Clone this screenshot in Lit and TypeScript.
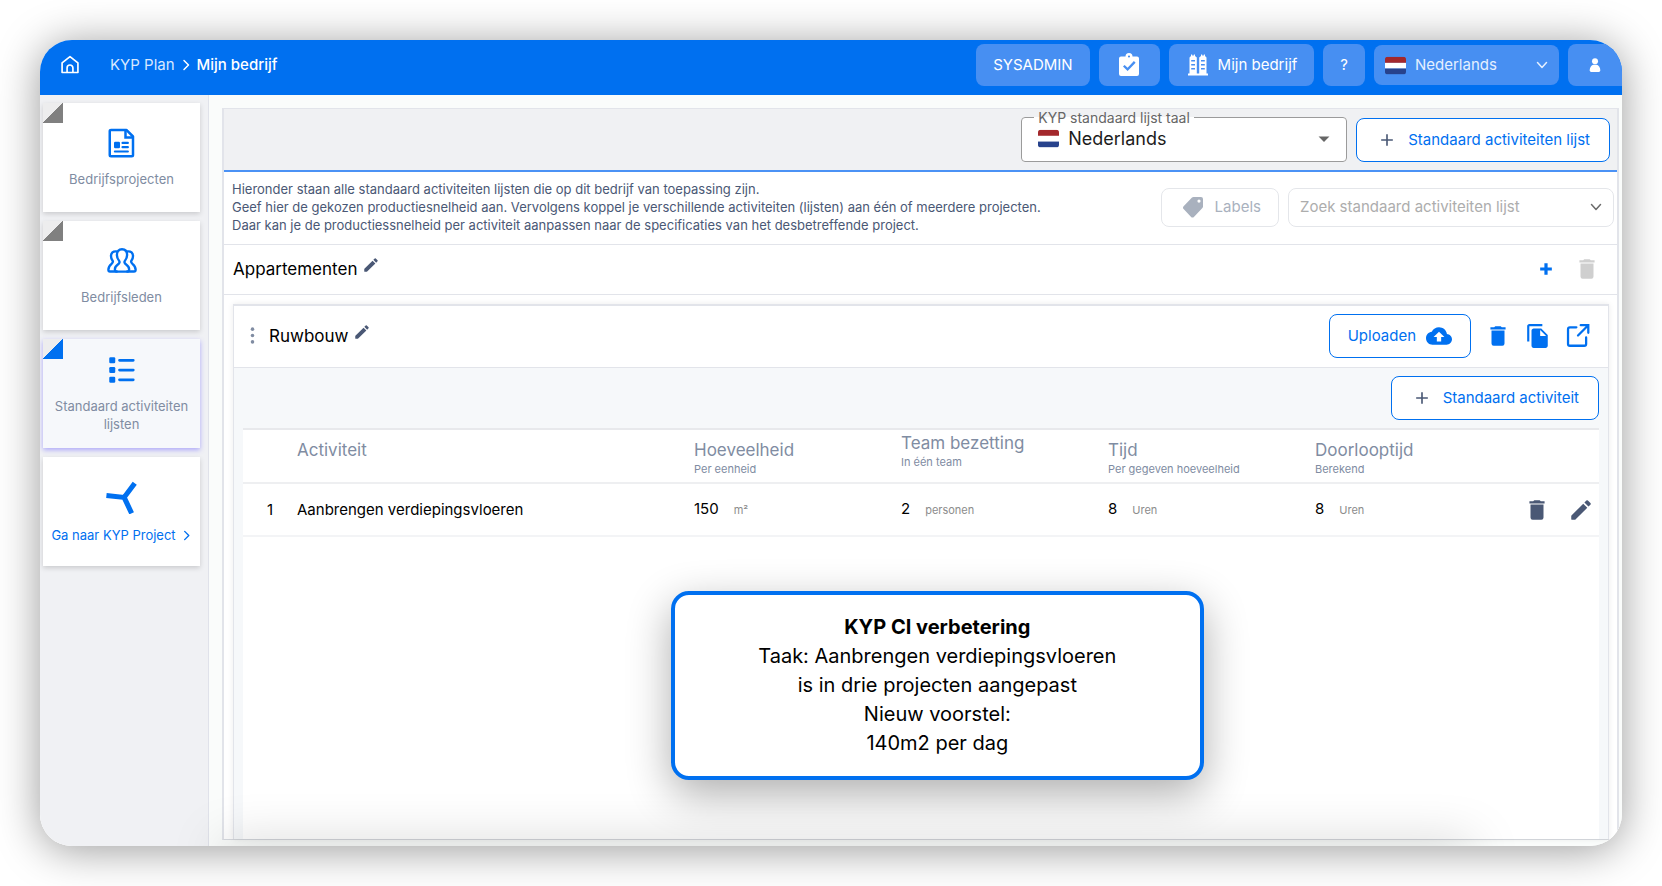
import { LitElement, html, css, svg } from "lit";
import { customElement, property } from "lit/decorators.js";

const TRASH = "M19 4h-3.500l-1-1h-5l-1 1H5v2h14zM6 19a2 2 0 0 0 2 2h8a2 2 0 0 0 2-2V7H6z";
const PENCIL =
  "M3 17.600V20.200c0 .5.300.800.800.800h2.600c.2 0 .4-.1.5-.2L17.810 9.940l-3.750-3.750L3.200 17.100c-.1.100-.2.300-.2.500zM20.710 7.040a1 1 0 0 0 0-1.410l-2.340-2.340a1 1 0 0 0-1.410 0l-1.830 1.830 3.750 3.750z";

const icons: Record<string, unknown> = {
  home: svg`<path d="M2.500 9.500 12 2l9.500 7.500V21h-19z M8.500 21v-5.500a3.500 3.500 0 0 1 7 0V21" fill="none" stroke="currentColor" stroke-width="2" stroke-linejoin="round"/>`,
  right: svg`<path d="M8 3l9 9-9 9" fill="none" stroke="currentColor" stroke-width="3" stroke-linecap="round" stroke-linejoin="round"/>`,
  down: svg`<path d="M3 7l9 10 9-10" fill="none" stroke="currentColor" stroke-width="3" stroke-linecap="round" stroke-linejoin="round"/>`,
  caret: svg`<path d="M5.500 9h13L12 15.500z" fill="currentColor"/>`,
  clipboard: svg`<path fill="currentColor" fill-rule="evenodd" d="M4 3.500h4.500a3.500 3.500 0 0 1 7 0H20a2 2 0 0 1 2 2V21a2 2 0 0 1-2 2H4a2 2 0 0 1-2-2V5.500a2 2 0 0 1 2-2zM12 2.400a1.100 1.100 0 1 0 0 2.200 1.100 1.100 0 0 0 0-2.200zM6 13.500l4.600 4.600 8-8.400-1.700-1.600-6.300 6.700-3-2.900z"/>`,
  buildings: svg`<path fill="currentColor" fill-rule="evenodd" d="M3.500 4.500 5 3V1.500h1.200V2.500h1.600V1.500H9V3l1.800 1.500V20.500h2.400V4.500L15 3V1.500h1.200V2.500h1.600V1.500H19V3l1.500 1.500v16h1.500V22.500H2v-2h1.500zM5.200 7v1.600h3.800V7zM5.200 11v1.600h3.800V11zM5.200 15v1.600h3.800V15zM15 7v1.600h3.800V7zM15 11v1.600h3.800V11zM15 15v1.600h3.800V15z"/>`,
  user: svg`<circle cx="12" cy="6.500" r="4.500" fill="currentColor"/><path d="M4 20c0-5 3-8 5.500-8.500h5C17 12 20 15 20 20c0 1.500-1 2.500-2.500 2.500h-11C5 22.500 4 21.500 4 20z" fill="currentColor"/>`,
  document: svg`<path d="M3.200 1.500h12.300l5.300 5.300v14.700a1 1 0 0 1-1 1H3.200a1 1 0 0 1-1-1V2.500a1 1 0 0 1 1-1z" fill="none" stroke="currentColor" stroke-width="2" stroke-linejoin="round"/><path d="M14.800 2v5.500h5.700" fill="none" stroke="currentColor" stroke-width="2"/><rect x="5.600" y="11" width="4.800" height="5.200" rx="1" fill="currentColor"/><path d="M12.400 11.900h4.300M12.400 15.300h4.300M6.300 18.800h10.400" stroke="currentColor" stroke-width="1.700" stroke-linecap="round"/>`,
  people: svg`<g fill="none" stroke="currentColor" stroke-width="1.900" stroke-linejoin="round" stroke-linecap="round"><path d="M12 2.600c2.600 0 4.100 1.900 4.100 4.600 0 2-.9 3.500-1.800 4.700-.7 1-.2 2 .8 2.700 1.400 1 2.600 2 2.600 4 0 1.400-.3 1.900-1.500 1.900H7.800c-1.200 0-1.500-.5-1.500-1.900 0-2 1.200-3 2.600-4 1-.7 1.500-1.700.8-2.700C8.800 10.700 7.900 9.200 7.900 7.200c0-2.700 1.500-4.600 4.100-4.600z"/><path d="M7.500 4.300C4.800 4 3.200 5.700 3.200 8c0 1.600.4 2.600 1.200 3.600.7.900.2 1.800-.8 2.700C1.600 16 1.100 17 1.100 19c0 1 .4 1.400 1.300 1.400h5.400M16.500 4.300c2.700-.3 4.300 1.400 4.300 3.700 0 1.600-.4 2.600-1.200 3.600-.7.900-.2 1.800.8 2.700 2 1.700 2.500 2.700 2.500 4.700 0 1-.4 1.400-1.300 1.400h-5.400"/></g>`,
  list: svg`<g fill="currentColor"><rect x="1.800" y="1.800" width="4.800" height="4.800" rx="1"/><rect x="1.800" y="9.600" width="4.800" height="4.800" rx="1"/><rect x="1.800" y="17.400" width="4.800" height="4.800" rx="1"/></g><path d="M10 4.200h11M10 12h11M10 19.800h11" stroke="currentColor" stroke-width="2.200" stroke-linecap="round"/>`,
  turbine: svg`<path d="M1 11 13.500 12.300 21 2.300M13.500 12.300 18.800 23.500" fill="none" stroke="currentColor" stroke-width="3.600"/>`,
  tag: svg`<path fill="currentColor" fill-rule="evenodd" d="M12.500 2H20a2 2 0 0 1 2 2v7.500c0 .6-.2 1.100-.6 1.500l-8.500 9c-.8.800-2 .8-2.800 0L2.600 14c-.8-.8-.8-2 0-2.800l8.400-8.600c.4-.4.900-.6 1.500-.6zM18 4.500a1.600 1.600 0 1 0 0 3.200 1.600 1.600 0 0 0 0-3.200z"/>`,
  plus: svg`<path d="M12 2v20M2 12h20" stroke="currentColor" stroke-width="2.800"/>`,
  plusBold: svg`<path d="M12 2v20M2 12h20" stroke="currentColor" stroke-width="5.500"/>`,
  dots: svg`<g fill="currentColor"><circle cx="12" cy="3" r="2.500"/><circle cx="12" cy="12" r="2.500"/><circle cx="12" cy="21" r="2.500"/></g>`,
  cloud: svg`<path fill="currentColor" d="M19.350 10.040C18.670 6.590 15.640 4 12 4 9.110 4 6.600 5.640 5.350 8.040 2.340 8.360 0 10.910 0 14c0 3.310 2.690 6 6 6h13c2.760 0 5-2.240 5-5 0-2.640-2.050-4.780-4.650-4.960zM14 13v4h-4v-4H7l5-5 5 5h-3z"/>`,
  trash: svg`<path fill="currentColor" d=${TRASH}/>`,
  pencil: svg`<path fill="currentColor" d=${PENCIL}/>`,
  copy: svg`<path fill="currentColor" d="M16 1H4c-1.100 0-2 .9-2 2v14h2V3h12V1zm-1 4H8c-1.100 0-1.990.9-1.990 2L6 21c0 1.100.890 2 1.990 2H19c1.100 0 2-.9 2-2V11l-6-6zm-1 7V6.500l5.500 5.500H14z"/>`,
  external: svg`<path d="M10.500 4H4.500A1.700 1.700 0 0 0 2.800 5.700V19.300A1.700 1.700 0 0 0 4.500 21H17.800a1.700 1.700 0 0 0 1.700-1.700v-6M14.500 2h7v7M21.200 2.300 12 11.500" fill="none" stroke="currentColor" stroke-width="2.100" stroke-linecap="round"/>`,
  flag: svg`<defs><clipPath id="f"><rect x="0" y="2" width="24" height="20" rx="3"/></clipPath></defs><g clip-path="url(#f)"><rect y="2" width="24" height="7" fill="#a3282c"/><rect y="9" width="24" height="6.500" fill="#fff"/><rect y="15.500" width="24" height="7" fill="#27428c"/></g>`,
};

@customElement("kyp-icon")
class KypIcon extends LitElement {
  @property() name = "";
  static styles = css`
    :host { display: inline-flex; flex: none; width: 24px; height: 24px; }
    svg { width: 100%; height: 100%; display: block; }
  `;
  render() {
    return html`<svg viewBox="0 0 24 24" aria-hidden="true">${icons[this.name]}</svg>`;
  }
}

interface NavItem { icon: string; label: string; active?: boolean; }
interface Column { title: string; sub: string; raised?: boolean; }

@customElement("app-root")
class AppRoot extends LitElement {
  private nav: NavItem[] = [
    { icon: "document", label: "Bedrijfsprojecten" },
    { icon: "people", label: "Bedrijfsleden" },
    { icon: "list", label: "Standaard activiteiten lijsten", active: true },
  ];
  private columns: Column[] = [
    { title: "Hoeveelheid", sub: "Per eenheid" },
    { title: "Team bezetting", sub: "In één team", raised: true },
    { title: "Tijd", sub: "Per gegeven hoeveelheid" },
    { title: "Doorlooptijd", sub: "Berekend" },
  ];
  private rows = [
    {
      name: "Aanbrengen verdiepingsvloeren",
      values: [["150", "m²"], ["2", "personen"], ["8", "Uren"], ["8", "Uren"]],
    },
  ];

  static styles = css`
    :host {
      --blue: #0070f0;
      --slate: #4a5875;
      --muted: #808ca2;
      --line: #e2e4ea;
      display: flex;
      box-sizing: border-box;
      min-height: 100vh;
      padding: 40px;
      background: #fff;
      font: 400 15px/18px Inter, "Liberation Sans", sans-serif;
      color: #000;
    }
    * { box-sizing: border-box; }
    button, select, input { font: inherit; color: inherit; margin: 0; }
    button { display: inline-flex; align-items: center; justify-content: center; padding: 0; border: 0; background: none; cursor: pointer; }
    a { color: inherit; text-decoration: none; }
    select { appearance: none; border: 0; background: transparent; padding: 0; min-width: 0; flex: 1; outline: none; }
    .window {
      position: relative; flex: 1; min-width: 0; display: flex; flex-direction: column;
      border-radius: 32px; box-shadow: 0 4px 44px rgba(0, 0, 0, 0.4);
    }
    .clip { flex: 1; display: flex; flex-direction: column; overflow: hidden; border-radius: 32px; background: #fafcfb; position: relative; }
    .glow {
      position: absolute; left: 180px; right: 150px; top: 100%; height: 20px;
      box-shadow: 0 0 50px rgba(0, 0, 0, 0.26); pointer-events: none;
    }
    .top { display: flex; align-items: flex-start; height: 55px; padding: 4px 0 0 20px; background: var(--blue); color: #fff; }
    .crumbs { display: flex; align-items: center; height: 42px; flex: 1; }
    .crumbs .home { margin-right: 30px; }
    .crumbs kyp-icon { display: block; width: 20px; height: 20px; }
    .crumbs .sep { width: 12px; height: 12px; margin: 0 5px; }
    .crumbs .root { color: #d8e8ff; }
    .crumbs .here { font-weight: 500; }
    .actions { display: flex; gap: 9px; }
    .pill { height: 42px; padding: 0 17px; border-radius: 8px; background: #478ff2; gap: 8px; }
    .pill.task { width: 61px; }
    .pill.user { width: 54px; border-radius: 8px 0 0 8px; }
    .pill.user kyp-icon { width: 16px; height: 16px; }
    .lang { display: flex; align-items: center; width: 185px; padding: 0 11px; gap: 9px; margin-top: 1px; height: 40px; color: #e4efff; }
    .lang .flag, .field .flag { width: 21px; height: 21px; }
    .lang .chev, .search .chev { width: 12px; height: 12px; }
    .body { flex: 1; display: flex; min-height: 0; }
    .side { width: 169px; flex: none; padding: 8px 8px 8px 3px; display: flex; flex-direction: column; gap: 9px; background: #f0f1f4; border-right: 1px solid #e0e2ea; }
    .tile {
      position: relative; height: 109px; display: flex; flex-direction: column; align-items: center; justify-content: center; gap: 12px;
      background: #fff; box-shadow: 0 2px 5px rgba(0, 0, 0, 0.16); color: var(--muted); font-size: 13px; text-align: center;
    }
    .tile kyp-icon { width: 30px; height: 30px; color: var(--blue); }
    .tile::before { content: ""; position: absolute; left: 0; top: 0; width: 20px; height: 20px; background: linear-gradient(135deg, #ededee 50%, #808080 50%); }
    .tile.active { background: #f6f8fb; box-shadow: 0 2px 5px rgba(90, 80, 255, 0.45); }
    .tile.active::before { background: linear-gradient(135deg, #ededee 50%, var(--blue) 50%); }
    .tile.go { color: var(--blue); }
    .tile.go::before { display: none; }
    .tile.go kyp-icon { width: 34px; height: 34px; }
    .tile.go .next { width: 11px; height: 11px; margin-left: 5px; vertical-align: -1px; }
    .main { flex: 1; min-width: 0; padding: 13px 3px 6px 13px; display: flex; }
    .panel { flex: 1; min-width: 0; display: flex; flex-direction: column; border: 1px solid var(--line); border-width: 1px 2px; background: #fff; border-bottom: 1px solid #d8dbe0; }
    .bar { display: flex; align-items: center; justify-content: flex-end; gap: 9px; height: 63px; padding: 0 7px; background: #f0f1f3; border-bottom: 2px solid #4b92f5; }
    .field { width: 326px; height: 51px; margin: -7px 0 0; padding: 0 12px 0 16px; min-width: 0; border: 1px solid #9b9b9b; border-radius: 4px; background: #fff; }
    .field legend { padding: 0 4px; margin-left: -4px; font-size: 14px; line-height: 14px; color: #666; }
    .field .row { display: flex; align-items: center; gap: 9px; height: 28px; font-size: 18px; color: #1c1c1c; }
    .field .row select { height: 28px; }
    .field .caret { width: 20px; height: 20px; color: #666; }
    .outline { height: 44px; padding: 0 18px; gap: 10px; border: 1px solid var(--blue); border-radius: 8px; background: #fff; color: var(--blue); }
    .outline .plus { width: 14px; height: 14px; margin: 0 4px; color: var(--slate); }
    .outline.wide { padding: 0 19px; }
    .outline .cloud { width: 26px; height: 26px; }
    .intro { display: flex; align-items: center; justify-content: space-between; gap: 12px; min-height: 73px; padding: 0 3px 2px 8px; border-bottom: 1px solid var(--line); }
    .intro p { margin: 0; font-size: 13px; color: var(--slate); }
    .filters { display: flex; gap: 9px; flex: none; }
    .tagbtn { height: 39px; padding: 0 17px 0 19px; gap: 10px; border: 1px solid #e4e6ea; border-radius: 8px; background: #fff; color: #a9b1be; }
    .search { display: flex; align-items: center; width: 326px; height: 39px; padding: 0 11px; border: 1px solid #e4e6ea; border-radius: 8px; color: #6c6c6c; }
    .search input { flex: 1; min-width: 0; border: 0; padding: 0; background: transparent; outline: none; }
    .search input::placeholder { color: #adadad; opacity: 1; }
    .group { display: flex; align-items: center; height: 50px; padding: 0 20px 1px 9px; border-bottom: 1px solid var(--line); }
    h2, h3 { margin: 0; font-weight: 400; font-size: 17px; line-height: 22px; }
    .edit { margin: 0 auto 8px 5px; color: var(--slate); }
    .edit kyp-icon { width: 18px; height: 18px; }
    .add { color: var(--blue); margin-right: 21px; }
    .add kyp-icon { width: 14px; height: 14px; }
    .i26 kyp-icon { width: 26px; height: 26px; }
    .off { color: #cfcfcf; margin-right: -3px; }
    .card { flex: 1; display: flex; flex-direction: column; margin: 9px 8px 0 9px; border: 1px solid var(--line); border-top-width: 2px; border-bottom: 0; background: #f6f8fa; box-shadow: 0 0 6px rgba(0, 0, 0, 0.08); }
    .cardhead { display: flex; align-items: center; height: 62px; padding: 0 17px 2px 10px; background: #fff; border-bottom: 1px solid var(--line); }
    .cardhead .grip { width: 17px; height: 17px; margin-right: 8px; color: var(--muted); }
    .tools { display: flex; align-items: center; gap: 14px; color: var(--blue); }
    .cardbar { display: flex; justify-content: flex-end; padding: 8px 9px; }
    .sheet { flex: 1; margin: 0 9px; background: #fff; }
    table { width: 100%; table-layout: fixed; border-collapse: collapse; border-top: 2px solid #e8e9ec; }
    th { height: 54px; padding: 9px 0 0; text-align: left; vertical-align: top; font-weight: 400; font-size: 17px; line-height: 22px; color: var(--muted); }
    th.raised { padding-top: 2px; }
    th small { display: block; font-size: 11px; line-height: 16px; }
    thead tr { border-bottom: 2px solid #eeeff1; }
    td { height: 53px; padding: 0; }
    tbody tr { border-bottom: 2px solid #f3f4f6; }
    td small { margin-left: 15px; font-size: 11px; color: #8c8c8c; }
    .nr { width: 54px; }
    td.nr { text-align: center; }
    .num { width: 207px; }
    .end { width: 77px; }
    .rowtools { display: flex; justify-content: flex-end; gap: 18px; padding-right: 5px; color: var(--slate); }
    .note {
      position: absolute; left: calc(40% - 2px); bottom: 66px; width: 533px; padding: 18px 20px; border: 4px solid var(--blue); border-radius: 18px;
      background: #fff; text-align: center; font-size: 20px; line-height: 29px; box-shadow: 0 14px 44px rgba(0, 0, 0, 0.32);
    }
    .note p { margin: 0; }
    .note strong { font-weight: 700; }
  `;

  render() {
    return html`
      <div class="window">
        <div class="clip">
          <header class="top">
            <nav class="crumbs" aria-label="Kruimelpad">
              <a class="home" href="#" aria-label="Home"><kyp-icon name="home"></kyp-icon></a>
              <a class="root" href="#">KYP Plan</a>
              <kyp-icon class="sep" name="right"></kyp-icon>
              <a class="here" href="#">Mijn bedrijf</a>
            </nav>
            <div class="actions">
              <button class="pill">SYSADMIN</button>
              <button class="pill task" aria-label="Taken"><kyp-icon name="clipboard"></kyp-icon></button>
              <button class="pill"><kyp-icon name="buildings"></kyp-icon>Mijn bedrijf</button>
              <button class="pill" aria-label="Hulp">?</button>
              <div class="pill lang">
                <kyp-icon class="flag" name="flag"></kyp-icon>
                <select aria-label="Taal"><option>Nederlands</option></select>
                <kyp-icon class="chev" name="down"></kyp-icon>
              </div>
              <button class="pill user" aria-label="Profiel"><kyp-icon name="user"></kyp-icon></button>
            </div>
          </header>
          <div class="body">
            <nav class="side" aria-label="Hoofdmenu">
              ${this.nav.map(
                (n) => html`<a class="tile ${n.active ? "active" : ""}" href="#"><kyp-icon name=${n.icon}></kyp-icon><span>${n.label}</span></a>`
              )}
              <a class="tile go" href="#"><kyp-icon name="turbine"></kyp-icon><span>Ga naar KYP Project<kyp-icon class="next" name="right"></kyp-icon></span></a>
            </nav>
            <main class="main">
              <section class="panel">
                <div class="bar">
                  <fieldset class="field">
                    <legend><label for="listlang">KYP standaard lijst taal</label></legend>
                    <div class="row">
                      <kyp-icon class="flag" name="flag"></kyp-icon>
                      <select id="listlang"><option>Nederlands</option></select>
                      <kyp-icon class="caret" name="caret"></kyp-icon>
                    </div>
                  </fieldset>
                  <button class="outline wide"><kyp-icon class="plus" name="plus"></kyp-icon>Standaard activiteiten lijst</button>
                </div>
                <div class="intro">
                  <p>
                    Hieronder staan alle standaard activiteiten lijsten die op dit bedrijf van toepassing zijn.<br />
                    Geef hier de gekozen productiesnelheid aan. Vervolgens koppel je verschillende activiteiten (lijsten) aan één of meerdere projecten.<br />
                    Daar kan je de productiessnelheid per activiteit aanpassen naar de specificaties van het desbetreffende project.
                  </p>
                  <div class="filters">
                    <button class="tagbtn"><kyp-icon name="tag"></kyp-icon>Labels</button>
                    <div class="search">
                      <input type="text" aria-label="Zoek standaard activiteiten lijst" placeholder="Zoek standaard activiteiten lijst" />
                      <kyp-icon class="chev" name="down"></kyp-icon>
                    </div>
                  </div>
                </div>
                <div class="group">
                  <h2>Appartementen</h2>
                  <button class="edit" aria-label="Naam wijzigen"><kyp-icon name="pencil"></kyp-icon></button>
                  <button class="add" aria-label="Toevoegen"><kyp-icon name="plusBold"></kyp-icon></button>
                  <button class="i26 off" aria-label="Verwijderen" disabled><kyp-icon name="trash"></kyp-icon></button>
                </div>
                <article class="card">
                  <div class="cardhead">
                    <kyp-icon class="grip" name="dots"></kyp-icon>
                    <h3>Ruwbouw</h3>
                    <button class="edit" aria-label="Naam wijzigen"><kyp-icon name="pencil"></kyp-icon></button>
                    <div class="tools">
                      <button class="outline">Uploaden<kyp-icon class="cloud" name="cloud"></kyp-icon></button>
                      <button class="i26" aria-label="Verwijderen"><kyp-icon name="trash"></kyp-icon></button>
                      <button class="i26" aria-label="Kopiëren"><kyp-icon name="copy"></kyp-icon></button>
                      <button class="i26" aria-label="Openen"><kyp-icon name="external"></kyp-icon></button>
                    </div>
                  </div>
                  <div class="cardbar">
                    <button class="outline wide"><kyp-icon class="plus" name="plus"></kyp-icon>Standaard activiteit</button>
                  </div>
                  <div class="sheet">
                    <table>
                      <thead>
                        <tr>
                          <th class="nr"></th>
                          <th>Activiteit</th>
                          ${this.columns.map((c) => html`<th class="num ${c.raised ? "raised" : ""}">${c.title}<small>${c.sub}</small></th>`)}
                          <th class="end"></th>
                        </tr>
                      </thead>
                      <tbody>
                        ${this.rows.map(
                          (r, i) => html`<tr>
                            <td class="nr">${i + 1}</td>
                            <td>${r.name}</td>
                            ${r.values.map(([v, u]) => html`<td>${v}<small>${u}</small></td>`)}
                            <td>
                              <div class="rowtools">
                                <button class="i26" aria-label="Verwijderen"><kyp-icon name="trash"></kyp-icon></button>
                                <button class="i26" aria-label="Wijzigen"><kyp-icon name="pencil"></kyp-icon></button>
                              </div>
                            </td>
                          </tr>`
                        )}
                      </tbody>
                    </table>
                  </div>
                </article>
              </section>
            </main>
          </div>
          <div class="glow"></div>
          <aside class="note">
            <p><strong>KYP CI verbetering</strong></p>
            <p>Taak: Aanbrengen verdiepingsvloeren</p>
            <p>is in drie projecten aangepast</p>
            <p>Nieuw voorstel:</p>
            <p>140m2 per dag</p>
          </aside>
        </div>
      </div>
    `;
  }
}
